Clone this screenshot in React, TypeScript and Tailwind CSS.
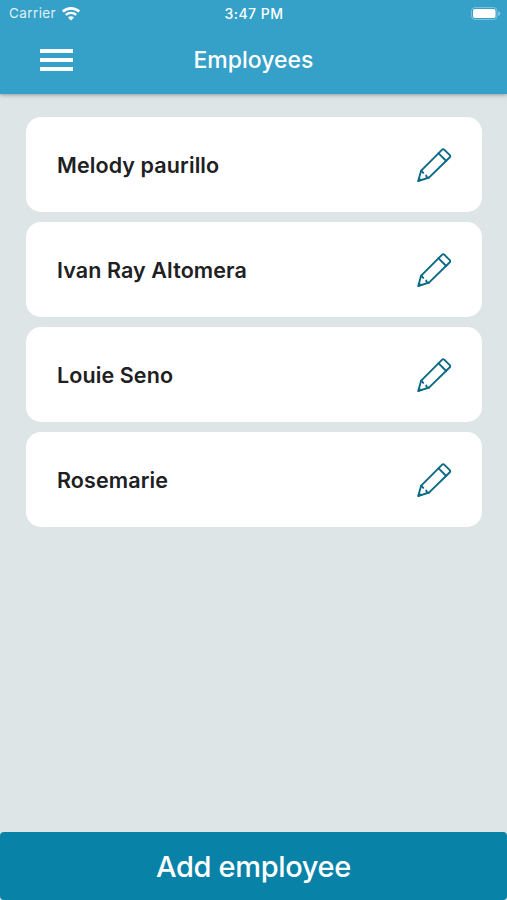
type Employee = {
  id: number;
  name: string;
};

const employees: Employee[] = [
  { id: 1, name: "Melody paurillo" },
  { id: 2, name: "Ivan Ray Altomera" },
  { id: 3, name: "Louie Seno" },
  { id: 4, name: "Rosemarie" },
];

const WifiIcon = () => (
  <svg width="20" height="16" viewBox="0 0 20 16" fill="none">
    <path d="M1.8 5.6a12 12 0 0 1 16.4 0" stroke="#fff" strokeWidth="2.7" />
    <path d="M4.8 8.9a7.8 7.8 0 0 1 10.4 0" stroke="#fff" strokeWidth="2.4" />
    <path d="M10 14.6 7 11.6a4.4 4.4 0 0 1 6 0z" fill="#fff" />
  </svg>
);

const BatteryIcon = () => (
  <svg width="32" height="14" viewBox="0 0 32 14" fill="none">
    <rect
      x="1.5"
      y="0.5"
      width="25.5"
      height="12"
      rx="3.5"
      stroke="#fff"
      strokeOpacity="0.35"
    />
    <rect x="3" y="2" width="22.5" height="9" rx="1.8" fill="#fff" />
    <path d="M28.3 4.3c2.6 1 2.6 3.7 0 4.7z" fill="#fff" fillOpacity="0.45" />
  </svg>
);

const PencilIcon = () => (
  <svg
    width="36"
    height="36"
    viewBox="0 0 36 36"
    fill="none"
    stroke="#0b6a85"
    strokeWidth="1.9"
    strokeLinecap="round"
    strokeLinejoin="round"
  >
    <path d="M2.2 34 5.2 23.6 26.2 2.6a1.4 1.4 0 0 1 2 0l5.6 5.6a1.4 1.4 0 0 1 0 2L13 30.6z" />
    <path d="M22.4 6.2 30.2 14" />
    <path d="M5.2 23.6 7.3 25.8M13 30.6 10.8 30.3 10.2 28.6" />
    <path d="M2.2 34 3.3 30.8 5.2 32.9z" fill="#0b6a85" strokeWidth="0.8" />
  </svg>
);

const StatusBar = () => (
  <div className="grid h-[27px] grid-cols-3 items-center pl-[9px] pr-[5px] text-[13.5px] text-white">
    <div className="flex items-center gap-[5px]">
      <span className="tracking-[0.4px] text-white/85">Carrier</span>
      <WifiIcon />
    </div>
    <span className="pr-[3px] text-center text-sm font-medium tracking-[0.45px]">
      3:47 PM
    </span>
    <div className="flex justify-end">
      <BatteryIcon />
    </div>
  </div>
);

const Header = () => (
  <header className="z-10 bg-[#35a0c8] shadow-[0_1px_4px_rgba(0,0,0,0.35)]">
    <StatusBar />
    <div className="grid h-[67px] grid-cols-3 items-center px-10">
      <button className="mb-0.5 flex w-[33px] flex-col gap-[5px]" aria-label="Menu">
        <span className="h-1 w-full bg-white" />
        <span className="h-1 w-full bg-white" />
        <span className="h-1 w-full bg-white" />
      </button>
      <h1 className="mb-px text-center text-[23px] font-medium text-white">
        Employees
      </h1>
    </div>
  </header>
);

const EmployeeCard = ({ name }: { name: string }) => (
  <li className="flex h-[95px] items-center justify-between rounded-[15px] bg-white pl-[31px] pr-[30px]">
    <span className="pt-px text-[21.5px] font-semibold tracking-[0.1px] text-[#202022]">
      {name}
    </span>
    <button className="pt-px" aria-label="Edit">
      <PencilIcon />
    </button>
  </li>
);

export default function App() {
  return (
    <div className="flex h-screen flex-col bg-[#dee5e7] font-['Inter',sans-serif]">
      <Header />
      <ul className="flex flex-1 flex-col gap-2.5 pl-[26px] pr-[25px] pt-[23px]">
        {employees.map((employee) => (
          <EmployeeCard key={employee.id} name={employee.name} />
        ))}
      </ul>
      <button className="h-[68px] rounded-[4px] bg-[#0882a7] pt-px text-[29px] font-medium tracking-[-0.35px] text-white">
        Add employee
      </button>
    </div>
  );
}
